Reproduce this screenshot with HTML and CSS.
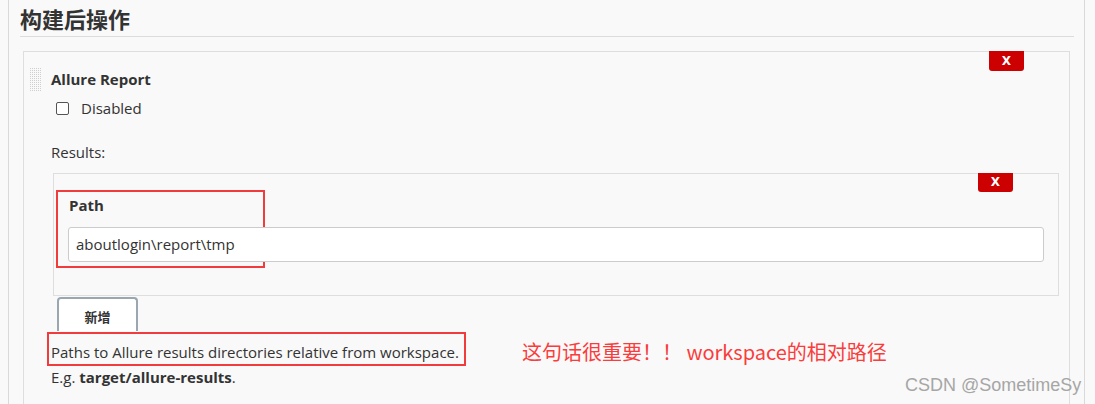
FILE: index.html
```html
<!DOCTYPE html>
<html lang="zh-CN">
<head>
    <meta charset="UTF-8">
    <title>构建后操作</title>
    <link rel="stylesheet" href="styles.css">
</head>
<body>
    <div class="section">
        <h2 class="section-title">构建后操作</h2>

        <div class="step-card">
            <div class="delete-btn">X</div>
            <div class="step-head">
                <span class="drag-handle"></span>
                <span class="step-name">Allure Report</span>
            </div>
            <div class="check-row">
                <span class="checkbox"></span>
                <span>Disabled</span>
            </div>

            <div class="field-label">Results:</div>
            <div class="repeat-card">
                <div class="delete-btn small">X</div>
                <div class="mark path-mark">
                    <div class="path-label">Path</div>
                </div>
                <div class="path-input">aboutlogin\report\tmp</div>
            </div>

            <div class="add-btn">新增</div>
            <div class="help-row">
                <div class="mark help-mark">Paths to Allure results directories relative from workspace.</div>
                <div class="note">这句话很重要！！ workspace的相对路径</div>
            </div>
            <div class="example">E.g. <b>target/allure-results</b>.</div>
        </div>
    </div>
    <div class="watermark">CSDN @SometimeSy</div>
</body>
</html>
```

FILE: styles.css
```css
* {
    box-sizing: border-box;
}

body {
    margin: 0;
    background: #f9f9f9;
    color: #333;
    font-family: "Open Sans", "Noto Sans CJK SC", sans-serif;
    font-size: 15px;
}

.section {
    margin-left: 8px;
    width: 1077px;
    height: 404px;
    border-left: 1px solid #d9d9d9;
    border-right: 1px solid #d9d9d9;
    padding: 0 0 0 11px;
}

.section-title {
    margin: 0 10px 0 0;
    height: 37px;
    padding-top: 3px;
    font-family: "Noto Sans CJK SC", sans-serif;
    font-size: 22px;
    font-weight: 700;
    line-height: 30px;
    color: #333;
    border-bottom: 1px solid #dcdcdc;
}

.step-card {
    position: relative;
    margin: 14px 0 0 3px;
    width: 1047px;
    height: 360px;
    border: 1px solid #dedede;
    border-bottom: none;
    padding: 0 0 0 27px;
}

.delete-btn {
    position: absolute;
    top: -1px;
    right: 45px;
    width: 35px;
    height: 20px;
    background: #cc0000;
    color: #fff;
    font-family: "DejaVu Sans", sans-serif;
    font-size: 12px;
    font-weight: 700;
    line-height: 20px;
    text-align: center;
    border-radius: 0 0 3px 3px;
}

.delete-btn.small {
    right: 45px;
    height: 19px;
    line-height: 19px;
}

.step-head {
    display: flex;
    align-items: center;
    height: 40px;
    padding-top: 14px;
}

/* dotted grip */
.drag-handle {
    width: 13px;
    height: 24px;
    margin: 0 9px 0 -22px;
    background-image:
        linear-gradient(to right, #f9f9f9 1px, transparent 1px),
        linear-gradient(to bottom, #f9f9f9 1px, #cfcfcf 1px);
    background-size: 2px 2px;
}

.step-name {
    font-weight: 700;
    font-size: 15px;
}

.check-row {
    display: flex;
    align-items: center;
    gap: 12px;
    height: 30px;
    margin-top: 1px;
    padding-left: 5px;
}

.checkbox {
    width: 13px;
    height: 13px;
    border: 1px solid #555;
    border-radius: 2px;
    background: #fff;
}

.field-label {
    margin-top: 16px;
    height: 34px;
    line-height: 26px;
}

.repeat-card {
    position: relative;
    margin-left: 2px;
    width: 1006px;
    height: 123px;
    border: 1px solid #dedede;
    padding: 16px 0 0 2px;
}

.mark {
    border: 2px solid #f03c3c;
}

.path-mark {
    width: 209px;
    height: 78px;
    margin-bottom: -41px;
    padding: 2px 0 0 11px;
}

.path-label {
    font-weight: 700;
    line-height: 22px;
}

.path-input {
    margin-left: 12px;
    width: 976px;
    height: 35px;
    padding-left: 7px;
    background: #fff;
    border: 1px solid #ccc;
    border-radius: 3px;
    line-height: 33px;
}

.add-btn {
    margin: 1px 0 0 6px;
    width: 81px;
    height: 34px;
    border: 2px solid #9aa7b1;
    border-bottom: none;
    border-radius: 4px 4px 0 0;
    background: #fff;
    font-family: "Noto Sans CJK SC", sans-serif;
    font-weight: 700;
    font-size: 13px;
    line-height: 36px;
    text-align: center;
    color: #333;
}

.help-row {
    display: flex;
    align-items: center;
}

.help-mark {
    margin-left: -4px;
    width: 419px;
    height: 34px;
    padding: 8px 0 0 2px;
    line-height: 20px;
    white-space: nowrap;
}

.note {
    margin-left: 56px;
    margin-top: 6px;
    color: #fa3c3c;
    font-family: "Noto Sans CJK SC", sans-serif;
    font-size: 20px;
}

.example {
    line-height: 22px;
}

.watermark {
    position: absolute;
    left: 905px;
    top: 375px;
    color: #a6a6a6;
    font-family: "Liberation Sans", sans-serif;
    font-size: 18px;
}
```
